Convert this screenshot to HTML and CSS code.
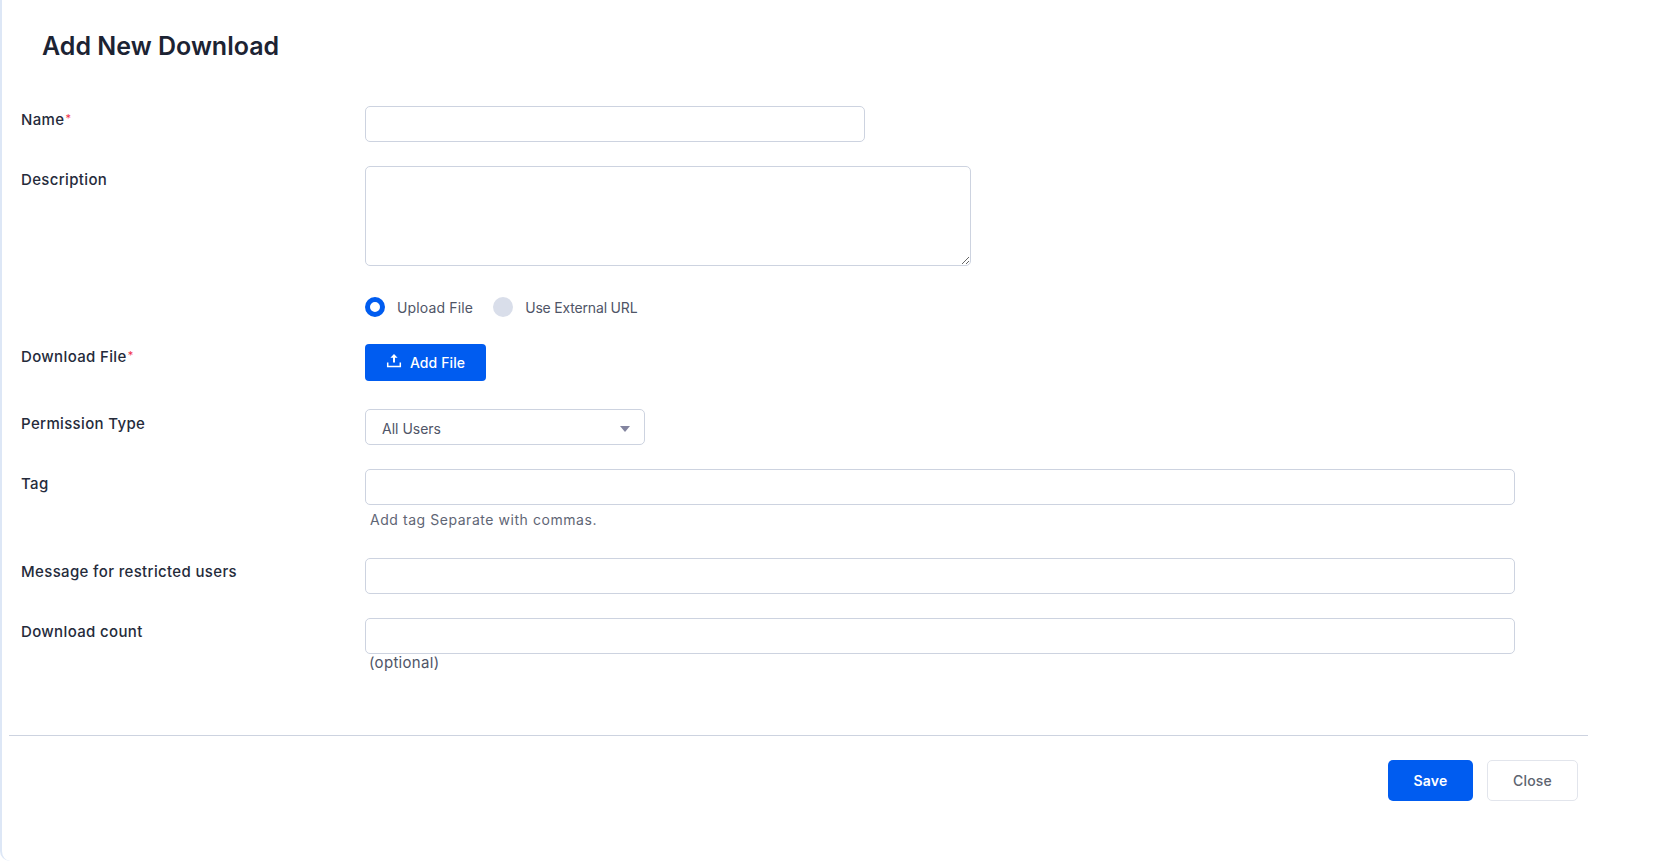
FILE: index.html
```html
<!DOCTYPE html>
<html lang="en">
<head>
<meta charset="utf-8">
<title>Add New Download</title>
<link rel="stylesheet" href="styles.css">
</head>
<body>
<main class="panel">
  <h1 class="title">Add New Download</h1>
  <form class="form">
    <div class="row row-name">
      <label class="label">Name<sup class="req">*</sup></label>
      <input class="field field-name" type="text">
    </div>
    <div class="row row-desc">
      <label class="label">Description</label>
      <textarea class="field field-desc"></textarea>
    </div>
    <div class="row row-radio">
      <span></span>
      <div class="radios">
        <label class="radio"><input type="radio" name="src" checked><span>Upload File</span></label>
        <label class="radio radio-url"><input type="radio" name="src"><span>Use External URL</span></label>
      </div>
    </div>
    <div class="row row-file">
      <label class="label label-file">Download File<sup class="req">*</sup></label>
      <button type="button" class="btn-add">
        <svg class="icon" viewBox="0 0 16 16" width="16" height="16" aria-hidden="true"><path d="M8 1 4.4 4.7h2.6v4.8h2V4.7h2.6z" fill="#fff"/><path d="M1.7 9.4v4.2h12.6V9.4" fill="none" stroke="#fff" stroke-width="1.5"/></svg>
        <span>Add File</span>
      </button>
    </div>
    <div class="row row-select">
      <label class="label label-low">Permission Type</label>
      <div class="select-wrap">
        <select class="field field-select"><option>All Users</option></select>
      </div>
    </div>
    <div class="row row-tag">
      <label class="label label-low">Tag</label>
      <div class="stack">
        <input class="field" type="text">
        <small class="help">Add tag Separate with commas.</small>
      </div>
    </div>
    <div class="row row-msg">
      <label class="label">Message for restricted users</label>
      <input class="field" type="text">
    </div>
    <div class="row row-count">
      <label class="label">Download count</label>
      <div class="stack">
        <input class="field" type="text">
        <small class="optional">(optional)</small>
      </div>
    </div>
  </form>
  <footer class="footer">
    <button type="button" class="btn btn-save">Save</button>
    <button type="button" class="btn btn-close">Close</button>
  </footer>
</main>
</body>
</html>
```
FILE: styles.css
```css
* { box-sizing: border-box; }
html, body { margin: 0; height: 100%; background: #fff; }
body { font-family: Inter, "Noto Sans", sans-serif; color: #252b3b; overflow: hidden; }
.panel {
  width: 1657px; height: 861px;
  border-left: 2px solid #dde7f6;
  border-bottom-left-radius: 10px;
  padding-left: 7px;
}
.title {
  margin: 0; padding: 29px 0 0 33px;
  height: 106px;
  font-size: 25px; line-height: 34px; font-weight: 600; color: #1c2333;
  letter-spacing: 0;
}
.form { width: 1513px; }
.row { display: grid; grid-template-columns: 344px 1150px; padding-left: 12px; }
.row-name { margin-bottom: 24px; }
.row-desc { margin-bottom: 31px; }
.row-radio { margin-bottom: 27px; }
.row-file { margin-bottom: 28px; }
.row-select { margin-bottom: 24px; }
.row-tag { margin-bottom: 24px; }
.row-msg { margin-bottom: 24px; }
.label { font-size: 15px; line-height: 28px; font-weight: 450; color: #252b3b; letter-spacing: 0.35px; }
.label-file { line-height: 26px; }
.label-low { padding-top: 1px; }
.req { color: #f0324b; font-size: 11px; line-height: 0; font-weight: 400; margin-left: 1px; vertical-align: 3px; }
.field {
  display: block; width: 100%; height: 36px;
  border: 1px solid #cdd3e0; border-radius: 5px; background: #fff;
  font: inherit; color: inherit; padding: 0 16px; outline: none;
}
.field-name { width: 500px; }
.field-desc { width: 606px; height: 100px; padding: 8px 16px; }
.radios { display: flex; gap: 20px; height: 20px; }
.radio { display: flex; align-items: center; gap: 12px; font-size: 14px; color: #4f5567; letter-spacing: 0.15px; }
.radio-url { letter-spacing: -0.18px; }
.radio input {
  appearance: none; margin: 0; width: 20px; height: 20px; border-radius: 50%;
  background: #d9deea;
}
.radio input:checked { background: #fff; border: 5px solid #005cf0; }
.btn-add {
  display: flex; align-items: center; justify-content: center; gap: 8px;
  width: 121px; height: 37px; border: 0; border-radius: 4px;
  background: #005cf0; color: #fff;
  font: inherit; font-size: 14px; font-weight: 500; letter-spacing: 0.1px;
}
.icon { display: block; margin-top: -3px; }
.select-wrap { position: relative; width: 280px; }
.select-wrap::after {
  content: ""; position: absolute; right: 15px; top: 17px;
  border-left: 5px solid transparent; border-right: 5px solid transparent;
  border-top: 6px solid #83849f;
}
.field-select { appearance: none; font-size: 14px; color: #4f5567; padding-top: 2px; }
.stack { display: flex; flex-direction: column; }
.help { font-size: 14px; line-height: 28px; padding: 1px 0 0 5px; color: #5f6675; letter-spacing: 0.55px; }
.optional { font-size: 15px; line-height: 18px; padding-left: 4px; color: #4f5567; letter-spacing: 0.3px; }
.footer {
  width: 1579px; margin-top: 63px;
  border-top: 1px solid #cdd3e0;
  padding: 24px 10px 0 0;
  display: flex; justify-content: flex-end; gap: 14px;
}
.btn {
  height: 41px; border-radius: 5px; font: inherit; font-size: 14px; font-weight: 600; letter-spacing: 0.2px;
}
.btn-save { width: 85px; border: 0; background: #005cf0; color: #fff; }
.btn-close { width: 91px; border: 1px solid #e2e5ec; background: #fff; color: #5d6470; font-weight: 500; }
```
